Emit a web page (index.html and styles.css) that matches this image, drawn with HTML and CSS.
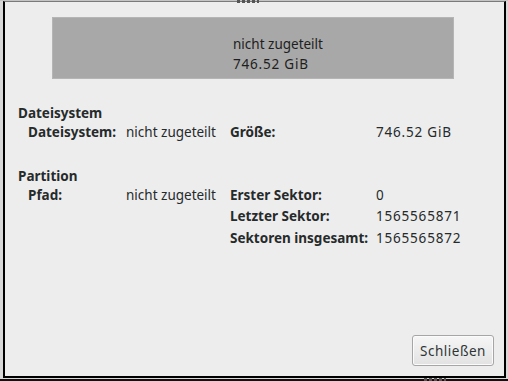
FILE: index.html
```html
<!DOCTYPE html>
<html lang="de">
<head>
    <meta charset="UTF-8">
    <title>Informationen zu nicht zugeteilt</title>
    <link rel="stylesheet" href="styles.css">
</head>
<body>
    <div class="window">
        <span class="grip grip-top"></span>
        <div class="dialog">
            <div class="bar">
                <div class="bar-text">
                    <div>nicht zugeteilt</div>
                    <div class="num">746.52 GiB</div>
                </div>
            </div>

            <section class="info">
                <h2>Dateisystem</h2>
                <div class="grid">
                    <span class="key">Dateisystem:</span>
                    <span>nicht zugeteilt</span>
                    <span class="key">Größe:</span>
                    <span class="num">746.52 GiB</span>
                </div>
            </section>

            <section class="info">
                <h2>Partition</h2>
                <div class="grid">
                    <span class="key">Pfad:</span>
                    <span>nicht zugeteilt</span>
                    <span class="key">Erster Sektor:</span>
                    <span class="num">0</span>

                    <span></span>
                    <span></span>
                    <span class="key">Letzter Sektor:</span>
                    <span class="num">1565565871</span>

                    <span></span>
                    <span></span>
                    <span class="key">Sektoren insgesamt:</span>
                    <span class="num">1565565872</span>
                </div>
            </section>

            <div class="actions">
                <button type="button">Schließen</button>
            </div>
        </div>
        <span class="grip grip-bottom"></span>
    </div>
</body>
</html>
```

FILE: styles.css
```css
body {
    margin: 0;
    font-family: "Noto Sans", sans-serif;
    font-size: 13.5px;
    color: #262a2b;
    background: #dcdcdc;
}

.window {
    position: relative;
    height: 381px;
    box-sizing: border-box;
    border-top: 1px solid #c4c4c4;
    border-bottom: 2px solid #111;
    padding: 0 2px 1px 3px;
    display: flex;
    background: #d8d8d8;
}

.dialog {
    flex: 1;
    display: flex;
    flex-direction: column;
    background: #ededed;
    border-top: 1px solid #7a7a7a;
    border-left: 2px solid #000;
    border-right: 2px solid #000;
    border-bottom: 2px solid #000;
}

.bar {
    width: 400px;
    height: 60px;
    margin: 15px 0 0 47px;
    background: #a8a8a8;
    border: 1px solid #b5b5b5;
    color: #1e1e1e;
}

.bar-text {
    padding: 16px 0 0 180px;
    line-height: 20px;
}

.num {
    letter-spacing: 0.8px;
}

.info {
    padding-left: 13px;
}

.info h2 {
    font-size: 13.5px;
    font-weight: bold;
    margin: 0;
    padding-top: 4px;
    line-height: 17px;
}

.bar + .info h2 {
    margin-top: 22px;
}

.info + .info {
    margin-top: 20px;
}

.grid {
    display: grid;
    grid-template-columns: 98px 104px 146px auto;
    padding-left: 10px;
    line-height: 21.5px;
}

.key {
    font-weight: bold;
}

.actions {
    margin-top: auto;
    display: flex;
    justify-content: flex-end;
    padding: 0 10px 10px 0;
}

.actions button {
    width: 82px;
    height: 31px;
    font-family: inherit;
    font-size: 13.5px;
    color: #2e3436;
    letter-spacing: 0.5px;
    border: 1px solid #a6a6a6;
    border-radius: 3px;
    background: linear-gradient(#f6f6f6, #e2e2e2);
    box-shadow: inset 0 0 0 1px #fbfbfb;
}

.grip {
    position: absolute;
    width: 22px;
    height: 3px;
    background: repeating-linear-gradient(90deg, #555 0 3px, transparent 3px 5px);
}

.grip-top {
    top: -1px;
    left: 237px;
}

.grip-bottom {
    bottom: -2px;
    left: 424px;
}
```
